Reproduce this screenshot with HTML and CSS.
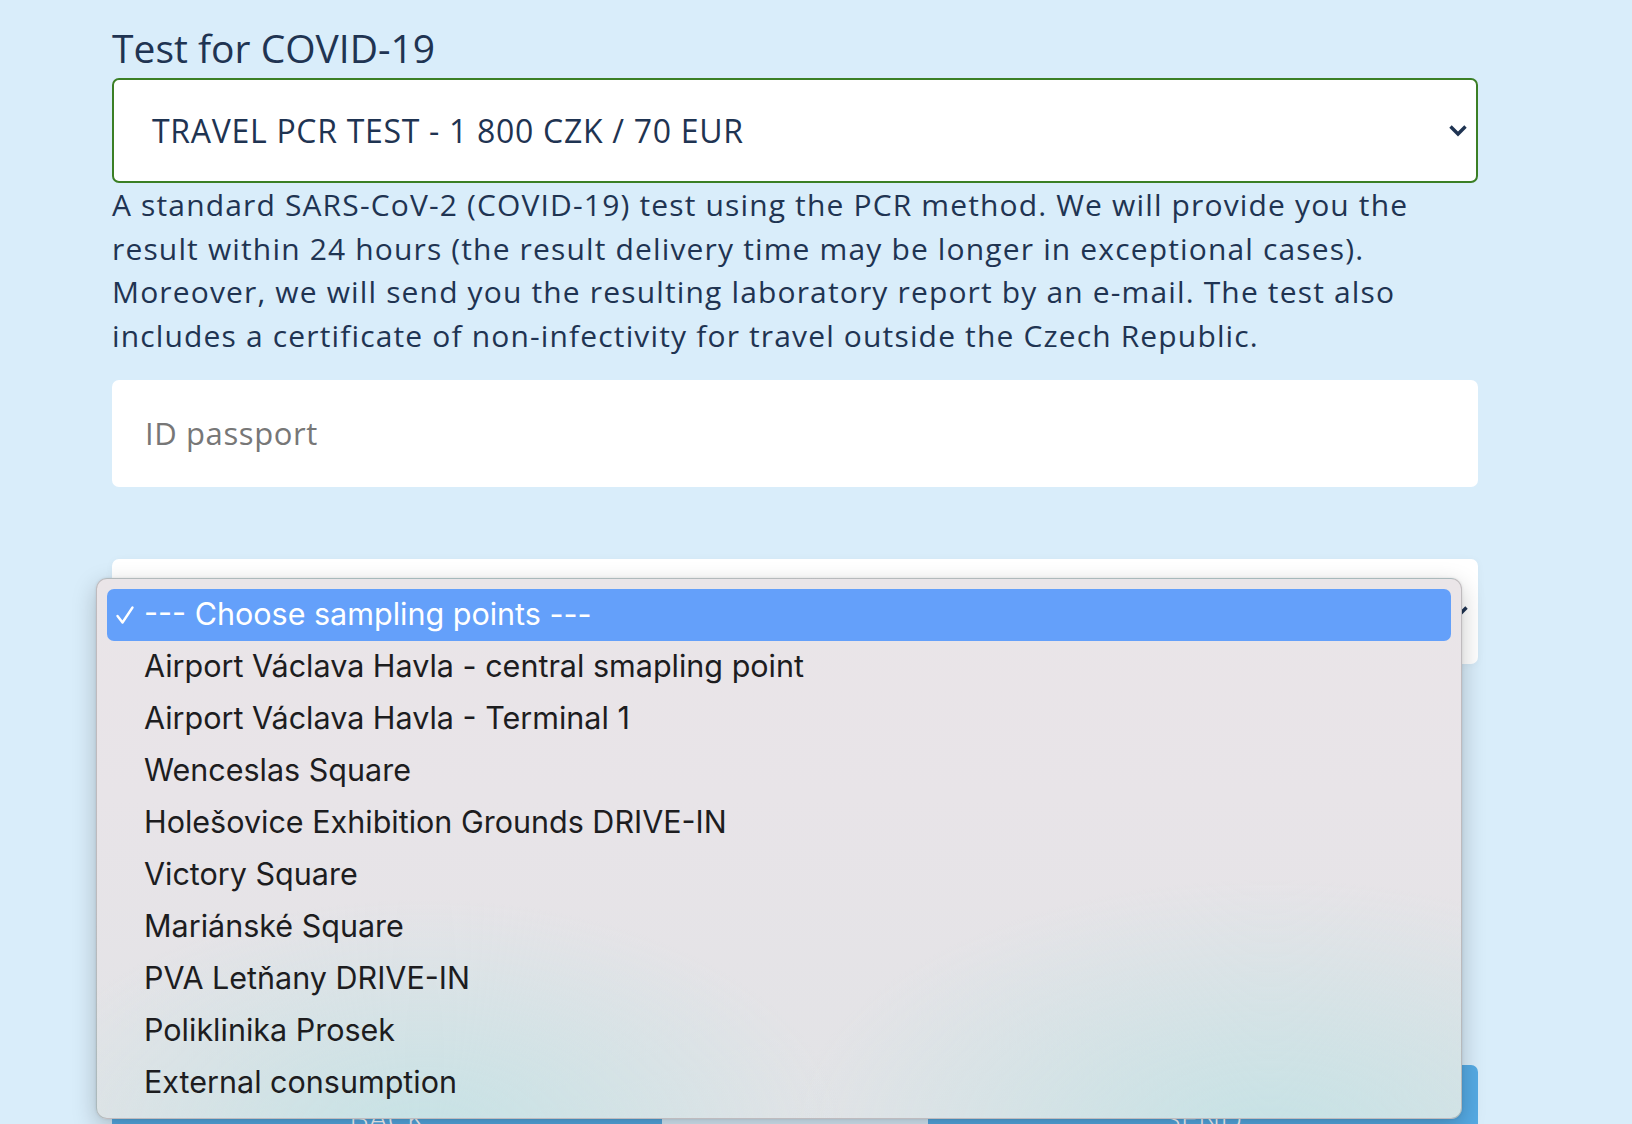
FILE: index.html
```html
<!DOCTYPE html>
<html lang="en">
<head>
    <meta charset="UTF-8">
    <meta name="viewport" content="width=device-width, initial-scale=1.0">
    <title>Test for COVID-19</title>
    <link rel="stylesheet" href="styles.css">
</head>
<body>
    <main class="form-wrap">
        <h2 class="form-title">Test for COVID-19</h2>

        <div class="select-box select-active">
            <span class="select-value">TRAVEL PCR TEST - 1 800 CZK / 70 EUR</span>
            <svg class="chevron" viewBox="0 0 20 13" fill="none" stroke="currentColor">
                <path d="M2.5 2.5l7.5 7.5 7.5-7.5" stroke-width="3.4"/>
            </svg>
        </div>

        <p class="test-desc">
            A standard SARS-CoV-2 (COVID-19) test using the PCR method. We will provide you the<br>
            result within 24 hours (the result delivery time may be longer in exceptional cases).<br>
            Moreover, we will send you the resulting laboratory report by an e-mail. The test also<br>
            includes a certificate of non-infectivity for travel outside the Czech Republic.
        </p>

        <div class="text-input">
            <span class="placeholder">ID passport</span>
        </div>

        <div class="select-box select-points">
            <span class="select-value"></span>
            <svg class="chevron" viewBox="0 0 20 13" fill="none" stroke="currentColor">
                <path d="M2.5 2.5l7.5 7.5 7.5-7.5" stroke-width="3.4"/>
            </svg>
        </div>

        <div class="buttons">
            <button class="btn">BACK</button>
            <button class="btn">SEND</button>
        </div>
    </main>

    <!-- native select menu, opened -->
    <div class="menu">
        <div class="menu-item selected">
            <svg class="check" viewBox="0 0 20 20" fill="none" stroke="currentColor">
                <path d="M2.5 11l5 6.5L17.5 2.5" stroke-width="2.4" stroke-linecap="round" stroke-linejoin="round"/>
            </svg>
            --- Choose sampling points ---
        </div>
        <div class="menu-item">Airport Václava Havla - central smapling point</div>
        <div class="menu-item">Airport Václava Havla - Terminal 1</div>
        <div class="menu-item">Wenceslas Square</div>
        <div class="menu-item">Holešovice Exhibition Grounds DRIVE-IN</div>
        <div class="menu-item">Victory Square</div>
        <div class="menu-item">Mariánské Square</div>
        <div class="menu-item">PVA Letňany DRIVE-IN</div>
        <div class="menu-item">Poliklinika Prosek</div>
        <div class="menu-item">External consumption</div>
    </div>
</body>
</html>
```

FILE: styles.css
```css
:root {
    --bg-color: #d9edfa;
    --text-color: #1f3452;
    --border-green: #3b7f25;
    --btn-blue: #55aae4;
    --menu-blue: #64a0fa;
}

* {
    margin: 0;
    padding: 0;
    box-sizing: border-box;
}

body {
    background-color: var(--bg-color);
    color: var(--text-color);
    font-family: 'Open Sans', 'Liberation Sans', sans-serif;
    height: 1124px;
    overflow: hidden;
}

.form-wrap {
    width: 1366px;
    margin-left: 112px;
    padding-top: 25px;
}

.form-title {
    font-size: 39px;
    font-weight: 400;
    line-height: 46px;
    margin-bottom: 7px;
}

.select-box {
    height: 105px;
    background: white;
    border-radius: 7px;
    display: flex;
    align-items: center;
    justify-content: space-between;
    padding: 0 8px 0 39px;
}

.select-active {
    border: 2px solid var(--border-green);
    padding-left: 38px;
}

.select-value {
    font-size: 32px;
    letter-spacing: 0.7px;
}

.chevron {
    width: 20px;
    height: 13px;
    color: var(--text-color);
}

.test-desc {
    font-size: 30px;
    line-height: 43.7px;
    letter-spacing: 1.15px;
    margin-top: 0;
    white-space: nowrap;
}

.text-input {
    margin-top: 22px;
    height: 107px;
    background: white;
    border-radius: 7px;
    display: flex;
    align-items: center;
    padding-left: 33px;
}

.placeholder {
    font-size: 31px;
    letter-spacing: 0.6px;
    color: #777;
}

.select-points {
    margin-top: 72px;
    box-shadow: 0 1px 8px rgba(0, 0, 0, 0.04);
    padding-right: 9px;
}

.buttons {
    margin-top: 401px;
    display: flex;
    justify-content: space-between;
}

.btn {
    width: 550px;
    height: 110px;
    background-color: var(--btn-blue);
    border: none;
    border-radius: 7px;
    color: white;
    font-family: 'Open Sans', sans-serif;
    font-weight: 300;
    font-size: 31px;
    padding-bottom: 4px;
}

.menu {
    position: absolute;
    top: 578px;
    left: 96px;
    width: 1366px;
    height: 541px;
    padding: 10px 10px;
    border-radius: 11px;
    border: 1px solid rgba(0, 0, 0, 0.18);
    box-shadow: 0 8px 24px rgba(0, 0, 0, 0.22), 0 0 3px rgba(0, 0, 0, 0.1);
    background:
        radial-gradient(ellipse 420px 240px at 24% 104%, rgba(196, 226, 229, 0.95), rgba(196, 226, 229, 0)),
        radial-gradient(ellipse 480px 260px at 86% 104%, rgba(196, 226, 229, 0.95), rgba(196, 226, 229, 0)),
        linear-gradient(180deg, #eae5e8 0%, #e8e4e8 40%, #e2e3e6 100%);
    font-family: Inter, 'Noto Sans', sans-serif;
    color: #1d1d1f;
}

.menu-item {
    height: 52px;
    display: flex;
    align-items: center;
    padding: 0 0 4px 37px;
    font-size: 30.5px;
    position: relative;
}

.menu-item.selected {
    background-color: var(--menu-blue);
    color: white;
    border-radius: 7px;
}

.check {
    position: absolute;
    left: 8px;
    top: 16px;
    width: 20px;
    height: 20px;
}
```
